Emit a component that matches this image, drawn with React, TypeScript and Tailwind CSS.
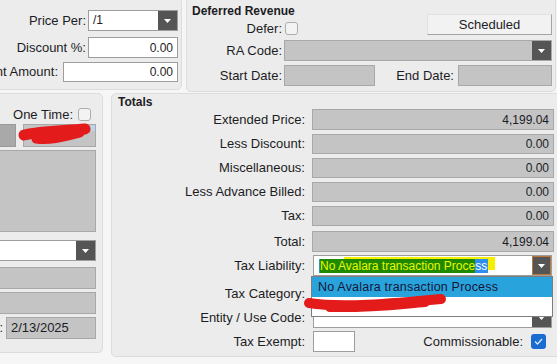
import React from "react";

function Arrow({ focused }: { focused?: boolean }) {
  return (
    <div
      className={
        "w-[19px] h-full shrink-0 flex items-center justify-center bg-[#555555] " +
        (focused ? "border border-[#b9773c]" : "")
      }
    >
      <svg width="7" height="4" viewBox="0 0 7 4">
        <path d="M0 0 L7 0 L3.5 4 Z" fill="#ffffff" />
      </svg>
    </div>
  );
}

function Check({ checked }: { checked?: boolean }) {
  if (checked) {
    return (
      <div className="w-[15px] h-[15px] rounded-[3px] bg-[#1b6cd0] flex items-center justify-center">
        <svg width="9" height="7" viewBox="0 0 9 7">
          <path d="M1 3.5 L3.5 6 L8 1" stroke="#dbe9fb" strokeWidth="1.3" fill="none" />
        </svg>
      </div>
    );
  }
  return <div className="w-[13px] h-[13px] rounded-[3px] bg-[#f3f3f3] border border-[#adadad]" />;
}

function Field({ value, white, className }: { value?: string; white?: boolean; className?: string }) {
  return (
    <div
      className={
        "border h-full flex items-center justify-end pr-[4px] text-[12px] " +
        (white ? "bg-white border-[#9d9d9d] " : "bg-[#c4c4c4] border-[#a8a8a8] ") +
        (className ?? "")
      }
    >
      {value}
    </div>
  );
}

function TotalRow({ label, value, h = "h-[20px]", mt = "mt-[4px]" }: { label: string; value?: string; h?: string; mt?: string }) {
  return (
    <div className={`flex items-center ${h} ${mt}`}>
      <span className="w-[193px] text-right whitespace-nowrap">{label}</span>
      <div className="ml-[7px] w-[242px] h-full">
        <Field value={value} />
      </div>
    </div>
  );
}

export default function App() {
  return (
    <div className="relative w-[557px] h-[364px] overflow-hidden bg-[#f6f6f6] text-[13px] text-[#1c1c24] font-['Liberation_Sans',Arial,sans-serif]">
      {/* top row */}
      <div className="flex items-start mt-[-6px] h-[98px]">
        {/* pricing */}
        <div className="ml-[-70px] w-[252px] h-[96px] shrink-0 rounded-[5px] bg-[#ececec] border border-[#dcdcdc] pt-[15px] pr-[3px]">
          <div className="flex justify-end items-center h-[21px] gap-[2px]">
            <span>Price Per:</span>
            <div className="w-[90px] h-full flex bg-white border border-[#9d9d9d]">
              <span className="flex-1 pl-[4px] text-[12px] leading-[19px]">/1</span>
              <Arrow />
            </div>
          </div>
          <div className="flex justify-end items-center h-[21px] gap-[2px] mt-[6px]">
            <span>Discount %:</span>
            <div className="w-[90px] h-full">
              <Field white value="0.00" />
            </div>
          </div>
          <div className="flex justify-end items-center h-[20px] gap-[5px] mt-[4px]">
            <span className="whitespace-nowrap">Discount Amount:</span>
            <div className="w-[115px] h-full shrink-0">
              <Field white value="0.00" />
            </div>
          </div>
        </div>

        {/* deferred revenue */}
        <div className="ml-[4px] w-[370px] h-[98px] shrink-0 rounded-[5px] bg-[#ececec] border border-[#dcdcdc] pt-[9px] pr-[3px]">
          <div className="flex items-end">
            <div>
              <div className="h-[14px] leading-[14px] pl-[5px] font-bold text-[12px]">Deferred Revenue</div>
              <div className="mt-[4px] flex items-center h-[13px]">
                <span className="w-[95px] text-right">Defer:</span>
                <div className="ml-[3px]">
                  <Check />
                </div>
              </div>
            </div>
            <button className="ml-auto w-[125px] h-[21px] bg-[#f2f2f2] border border-[#e2e2e2] border-b-[#a3a3a3] border-r-[#a3a3a3] text-[13px]">
              Scheduled
            </button>
          </div>
          <div className="flex items-center h-[21px] mt-[5px]">
            <span className="w-[95px] text-right">RA Code:</span>
            <div className="ml-[2px] flex-1 h-full flex bg-[#c4c4c4] border border-[#a8a8a8]">
              <div className="flex-1" />
              <Arrow />
            </div>
          </div>
          <div className="flex items-center h-[21px] mt-[4px]">
            <span className="w-[95px] text-right">Start Date:</span>
            <div className="ml-[2px] w-[91px] h-full">
              <Field />
            </div>
            <span className="flex-1 text-right">End Date:</span>
            <div className="ml-[4px] w-[94px] h-full">
              <Field />
            </div>
          </div>
        </div>
      </div>

      {/* bottom row */}
      <div className="flex items-start mt-[1px]">
        {/* left details */}
        <div className="ml-[-70px] w-[173px] h-[260px] shrink-0 rounded-[5px] bg-[#ececec] border border-[#dcdcdc] pt-[14px] pr-[6px] pl-[10px]">
          <div className="flex justify-end items-center h-[13px] gap-[5px] pr-[5px]">
            <span>One Time:</span>
            <Check />
          </div>
          <div className="flex h-[23px] mt-[3px] gap-[7px]">
            <div className="flex-1 bg-[#a9a9a9] border border-[#9a9a9a]" />
            <div className="relative w-[73px] bg-[#c4c4c4] border border-[#a8a8a8]">
              <div className="absolute right-0 top-0 w-[4px] h-[6px] bg-[#bcd5ee]" />
            </div>
          </div>
          <div className="h-[82px] mt-[3px] bg-[#c4c4c4] border border-[#a8a8a8]" />
          <div className="h-[21px] mt-[8px] flex bg-white border border-[#9d9d9d]">
            <div className="flex-1" />
            <Arrow />
          </div>
          <div className="h-[22px] mt-[6px]">
            <Field />
          </div>
          <div className="h-[22px] mt-[3px]">
            <Field />
          </div>
          <div className="flex justify-end items-center h-[22px] mt-[3px] gap-[3px]">
            <span className="whitespace-nowrap">Date:</span>
            <div className="w-[90px] shrink-0 h-full bg-[#c4c4c4] border border-[#a8a8a8] pl-[4px] flex items-center text-[13px]">
              2/13/2025
            </div>
          </div>
        </div>

        {/* totals */}
        <div className="ml-[8px] w-[450px] h-[264px] shrink-0 rounded-[5px] bg-[#ececec] border border-[#dcdcdc] pt-[1px]">
          <div className="h-[14px] leading-[14px] pl-[6px] font-bold text-[12px]">Totals</div>
          <TotalRow label="Extended Price:" value="4,199.04" h="h-[21px]" mt="mt-0" />
          <TotalRow label="Less Discount:" value="0.00" />
          <TotalRow label="Miscellaneous:" value="0.00" />
          <TotalRow label="Less Advance Billed:" value="0.00" />
          <TotalRow label="Tax:" value="0.00" />
          <TotalRow label="Total:" value="4,199.04" h="h-[21px]" mt="mt-[5px]" />

          <div className="flex items-center h-[21px] mt-[3px]">
            <span className="w-[193px] text-right">Tax Liability:</span>
            <div className="ml-[8px] w-[239px] h-full flex bg-white border border-[#9d9d9d]">
              <div className="flex-1 flex items-center pl-[5px]">
                <span className="relative">
                  <span className="absolute left-[25px] -top-[2px] w-[151px] h-[13px] bg-[#f6f000]" />
                  <span className="relative block bg-[#2f8ff0] px-[1px] leading-[14px] text-[12px]">
                    <span className="bg-[#1f8a00] text-[#e9f700]">No Avalara transaction Proce</span>
                    <span className="text-white">ss</span>
                  </span>
                </span>
              </div>
              <Arrow focused />
            </div>
          </div>
          <div className="flex items-center h-[21px] mt-[7px]">
            <span className="w-[193px] text-right">Tax Category:</span>
          </div>
          <div className="flex items-center h-[21px] mt-[3px]">
            <span className="w-[193px] text-right">Entity / Use Code:</span>
            <div className="ml-[8px] w-[239px] h-full flex bg-white border border-[#9d9d9d]">
              <div className="flex-1" />
              <Arrow />
            </div>
          </div>
          <div className="flex items-center h-[21px] mt-[3px]">
            <span className="w-[193px] text-right">Tax Exempt:</span>
            <div className="ml-[8px] w-[42px] h-full bg-white border border-[#9d9d9d]" />
            <span className="flex-1 text-right">Commissionable:</span>
            <div className="ml-[8px] mr-[14px]">
              <Check checked />
            </div>
          </div>
        </div>
      </div>

      {/* open dropdown list */}
      <div className="absolute left-[311px] top-[276px] w-[242px] h-[41px] bg-white border border-[#7d7d7d]">
        <div className="h-[20px] bg-[#29a3dc] pl-[6px] flex items-center text-[12.5px] text-[#16163a] tracking-[0.2px]">
          No Avalara transaction Process
        </div>
      </div>

      {/* red marker scribbles */}
      <svg className="absolute left-0 top-0 pointer-events-none" width="557" height="364">
        <path d="M24 135 C 42 131, 64 131, 85 129" stroke="#e31b1b" strokeWidth="11" strokeLinecap="round" fill="none" />
        <path d="M36 139 C 50 141, 64 137, 80 133" stroke="#e31b1b" strokeWidth="9" strokeLinecap="round" fill="none" />
        <path d="M309 303 C 340 308, 390 304, 441 299" stroke="#e31b1b" strokeWidth="10" strokeLinecap="round" fill="none" />
        <path d="M330 307 C 370 308, 400 304, 425 302" stroke="#e31b1b" strokeWidth="10" strokeLinecap="round" fill="none" />
      </svg>
    </div>
  );
}
